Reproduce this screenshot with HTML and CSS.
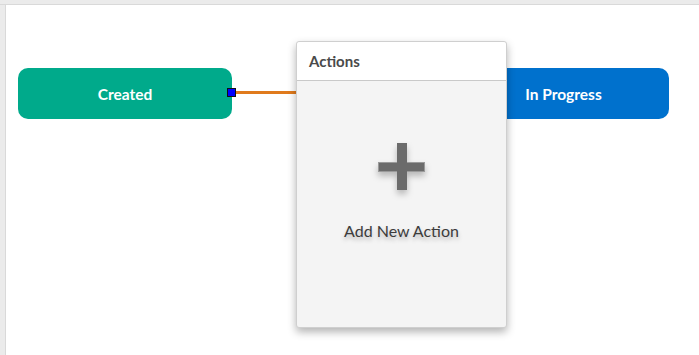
FILE: index.html
```html
<!DOCTYPE html>
<html lang="en">
<head>
<meta charset="UTF-8" />
<title>Workflow</title>
<link rel="stylesheet" href="styles.css">
</head>
<body>
<div class="topbar"></div>
<div class="main">
  <div class="sidebar"></div>
  <div class="canvas">
    <div class="node node-created">Created</div>
    <div class="port"></div>
    <div class="edge"></div>
    <div class="node node-progress">In Progress</div>

    <div class="actions">
      <div class="actions-head">Actions</div>
      <div class="actions-body">
        <div class="plus"><span class="plus-h"></span><span class="plus-v"></span></div>
        <div class="add-label">Add New Action</div>
      </div>
    </div>
  </div>
</div>
</body>
</html>
```

FILE: styles.css
```css
* {
  box-sizing: border-box;
}
body {
  margin: 0;
  font-family: Lato, "Open Sans", sans-serif;
  background: #fff;
  height: 355px;
  overflow: hidden;
  display: flex;
  flex-direction: column;
}
.topbar {
  height: 5px;
  background: #ebebeb;
  border-bottom: 1px solid #d9d9d9;
  flex: none;
}
.main {
  flex: 1;
  display: flex;
}
.sidebar {
  width: 6px;
  background: #ebebeb;
  border-right: 1px solid #d9d9d9;
  flex: none;
}
.canvas {
  flex: 1;
  position: relative;
}

/* diagram nodes, placed on the canvas */
.node {
  position: absolute;
  top: 63px;
  height: 51px;
  border-radius: 10px;
  color: #fff;
  font-weight: 700;
  font-size: 15.5px;
  display: flex;
  align-items: center;
  justify-content: center;
}
.node-created {
  left: 12px;
  width: 214px;
  background: #00aa8b;
}
.node-progress {
  left: 430px;
  width: 233px;
  background: #0071cd;
  padding-left: 22px;
}
.port {
  position: absolute;
  left: 221px;
  top: 83px;
  width: 9px;
  height: 9px;
  background: #0000ff;
  border: 1px solid #111;
  z-index: 2;
}
.edge {
  position: absolute;
  left: 230px;
  top: 86px;
  width: 62px;
  height: 3px;
  background: #e07a1c;
}

/* popup panel */
.actions {
  position: absolute;
  left: 290px;
  top: 36px;
  width: 211px;
  height: 287px;
  border: 1px solid #cfcfcf;
  border-radius: 3px;
  background: #f4f4f4;
  box-shadow: 0 4px 8px rgba(0, 0, 0, 0.3);
  display: flex;
  flex-direction: column;
  z-index: 3;
}
.actions-head {
  height: 39px;
  background: #fff;
  border-bottom: 1px solid #c9c9c9;
  border-radius: 3px 3px 0 0;
  padding: 10px 0 0 12px;
  font-size: 15px;
  font-weight: 700;
  color: #4a4a4a;
}
.actions-body {
  display: flex;
  flex-direction: column;
  align-items: center;
  padding-top: 62px;
}
.plus {
  position: relative;
  width: 47px;
  height: 47px;
  filter: drop-shadow(0 4px 3px rgba(0, 0, 0, 0.25));
}
.plus-h, .plus-v {
  position: absolute;
  background: #6b6b6b;
  border: 1px solid #9a9a9a;
}
.plus-h {
  left: 0;
  top: 19px;
  width: 47px;
  height: 10px;
}
.plus-v {
  left: 19px;
  top: 0;
  width: 10px;
  height: 47px;
  border-color: #6b6b6b;
}
.add-label {
  margin-top: 31px;
  font-size: 16px;
  color: #3c3c3c;
  text-shadow: 0 3px 4px rgba(0, 0, 0, 0.25);
}
```
